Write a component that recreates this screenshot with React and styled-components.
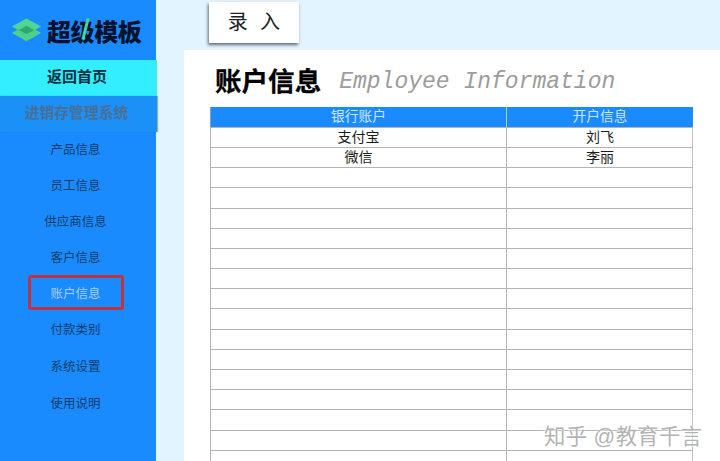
import React from "react";
import styled, { createGlobalStyle } from "styled-components";

const Global = createGlobalStyle`
  html, body { margin: 0; padding: 0; height: 461px; overflow: hidden; background: #e2f4ff; }
  #root { height: 461px; }
`;
const CJK = `"Liberation Sans", "Noto Sans CJK SC", sans-serif`;

const Page = styled.div`
  position: relative; width: 720px; height: 461px; display: flex; overflow: hidden;
  font-family: ${CJK};
`;
const Sidebar = styled.aside`
  width: 156px; flex: none; background: #1a8bff; display: flex; flex-direction: column;
`;
const Logo = styled.div`
  height: 60px; display: flex; align-items: center; gap: 5px; padding: 0 0 0 11px; box-sizing: border-box;
`;
const LogoText = styled.span`
  position: relative; font-size: 24px; font-weight: 900; color: #05122e; letter-spacing: -0.4px; white-space: nowrap;
  &::after {
    content: ""; position: absolute; left: 37px; top: 5px; width: 3px; height: 22px;
    background: #3fd6a0; transform: rotate(14deg);
  }
`;
const HomeLink = styled.div`
  height: 36px; background: #33eeff; color: #06303f; font-size: 15px; font-weight: 700;
  display: flex; align-items: center; justify-content: center; margin-right: -1px;
  padding: 0 3px 5px 0; box-sizing: border-box;
`;
const SystemTitle = styled.div`
  height: 36px; background: #1b90f6; color: #4a6f96; font-size: 14.8px; font-weight: 700;
  display: flex; align-items: center; justify-content: center; margin-right: -1px;
  padding: 0 4px 5px 0; box-sizing: border-box;
  box-shadow: 1px 0 1px rgba(0, 40, 90, .35);
`;
const NavList = styled.nav`
  display: flex; flex-direction: column;
`;
const NavItem = styled.div`
  height: ${p => p.$h}px; display: flex; align-items: center; justify-content: center;
  padding: 0 5px 4px 0; box-sizing: border-box;
  font-size: 12.5px; color: ${p => (p.$active ? "#a9cdf2" : "#123c6a")};
`;
const RedBox = styled.div`
  position: absolute; left: 28px; top: 275px; width: 96px; height: 35px; box-sizing: border-box;
  border: 3px solid #c2323f; border-radius: 3px;
`;
const Main = styled.main`
  flex: 1; min-width: 0; display: flex; flex-direction: column;
`;
const TopBar = styled.div`
  height: 50px; flex: none; padding: 2px 0 0 53px; box-sizing: border-box; background: #e2f4ff;
`;
const EntryButton = styled.div`
  width: 90px; height: 41px; background: #fff; box-shadow: -1px 2px 3px rgba(40, 50, 60, .7);
  display: flex; align-items: center; justify-content: center;
  font-size: 20px; color: #222; letter-spacing: 3.25px; white-space: pre; padding: 0 0 5px 3px; box-sizing: border-box;
`;
const Content = styled.div`
  flex: 1; min-height: 0; display: flex;
`;
const Gutter = styled.div`
  width: 28px; flex: none;
`;
const Panel = styled.section`
  flex: 1; min-width: 0; background: #fff; padding: 14px 27px 0 26px; box-sizing: border-box; overflow: hidden;
`;
const Heading = styled.div`
  display: flex; align-items: flex-start; gap: 18px; height: 42.6px; padding-left: 5px; white-space: nowrap;
`;
const Title = styled.h1`
  margin: 0; font-size: 26.5px; font-weight: 700; color: #000; line-height: 37px; letter-spacing: .05px;
  -webkit-text-stroke: .3px #000;
`;
const Subtitle = styled.span`
  font-family: "Liberation Mono", monospace; font-style: italic; font-size: 23px; color: #9c9c9c;
  line-height: 36px;
`;
const Table = styled.div`
  display: grid; grid-template-columns: 296px 187px; width: 483px;
  border-right: 1px solid #c4c4c4;
  box-sizing: border-box;
`;
const HeadCell = styled.div`
  height: 20.2px; background: #1a8bff; color: #cfe6ff; font-size: 13.7px; line-height: 20px; text-align: center;
  box-sizing: border-box; border-left: 1px solid ${p => (p.$first ? "#7f9fbf" : "#a7cdf2")};
`;
const Cell = styled.div`
  height: 20.2px; color: #1c1c1c; font-size: 14px; line-height: 19px; text-align: center;
  box-sizing: border-box; border-left: 1px solid #b4b4b4; border-top: 1px solid #b4b4b4;
`;
const Watermark = styled.div`
  position: absolute; left: 544px; top: 419px; font-size: 21.4px; color: rgba(165, 165, 165, .85);
  letter-spacing: .3px; white-space: nowrap; text-shadow: 0 0 2px #fff, 0 0 2px #fff;
`;

const items = [
  ["产品信息", 36], ["员工信息", 36], ["供应商信息", 36], ["客户信息", 36],
  ["账户信息", 36, true], ["付款类别", 37], ["系统设置", 37], ["使用说明", 37],
];
const rows = [["支付宝", "刘飞"], ["微信", "李丽"], ...Array.from({ length: 16 }, () => ["", ""])];

const LogoMark = () => (
  <svg width="31" height="26" viewBox="0 0 32 26" aria-hidden="true">
    <path d="M1 16 L7 12.5 L16 17 L25 12.5 L31 16 L16 24.5 Z" fill="#4fd08a" />
    <path d="M1 9.5 L16 1 L31 9.5 L16 18 Z" fill="#50d692" />
    <path d="M8 13 L16 8.5 L24 13 L16 17.5 Z" fill="#2fa876" />
  </svg>
);

export default function App() {
  return (
    <Page>
      <Global />
      <Sidebar>
        <Logo>
          <LogoMark />
          <LogoText>超级模板</LogoText>
        </Logo>
        <HomeLink>返回首页</HomeLink>
        <SystemTitle>进销存管理系统</SystemTitle>
        <NavList>
          {items.map(([t, h, a]) => (
            <NavItem key={t} $h={h} $active={a}>{t}</NavItem>
          ))}
        </NavList>
      </Sidebar>
      <Main>
        <TopBar>
          <EntryButton>录 入</EntryButton>
        </TopBar>
        <Content>
          <Gutter />
          <Panel>
            <Heading>
              <Title>账户信息</Title>
              <Subtitle>Employee Information</Subtitle>
            </Heading>
            <Table>
              <HeadCell $first>银行账户</HeadCell>
              <HeadCell>开户信息</HeadCell>
              {rows.map((r, i) => (
                <React.Fragment key={i}>
                  <Cell>{r[0]}</Cell>
                  <Cell>{r[1]}</Cell>
                </React.Fragment>
              ))}
            </Table>
          </Panel>
        </Content>
      </Main>
      <RedBox />
      <Watermark>知乎 @教育千言</Watermark>
    </Page>
  );
}
